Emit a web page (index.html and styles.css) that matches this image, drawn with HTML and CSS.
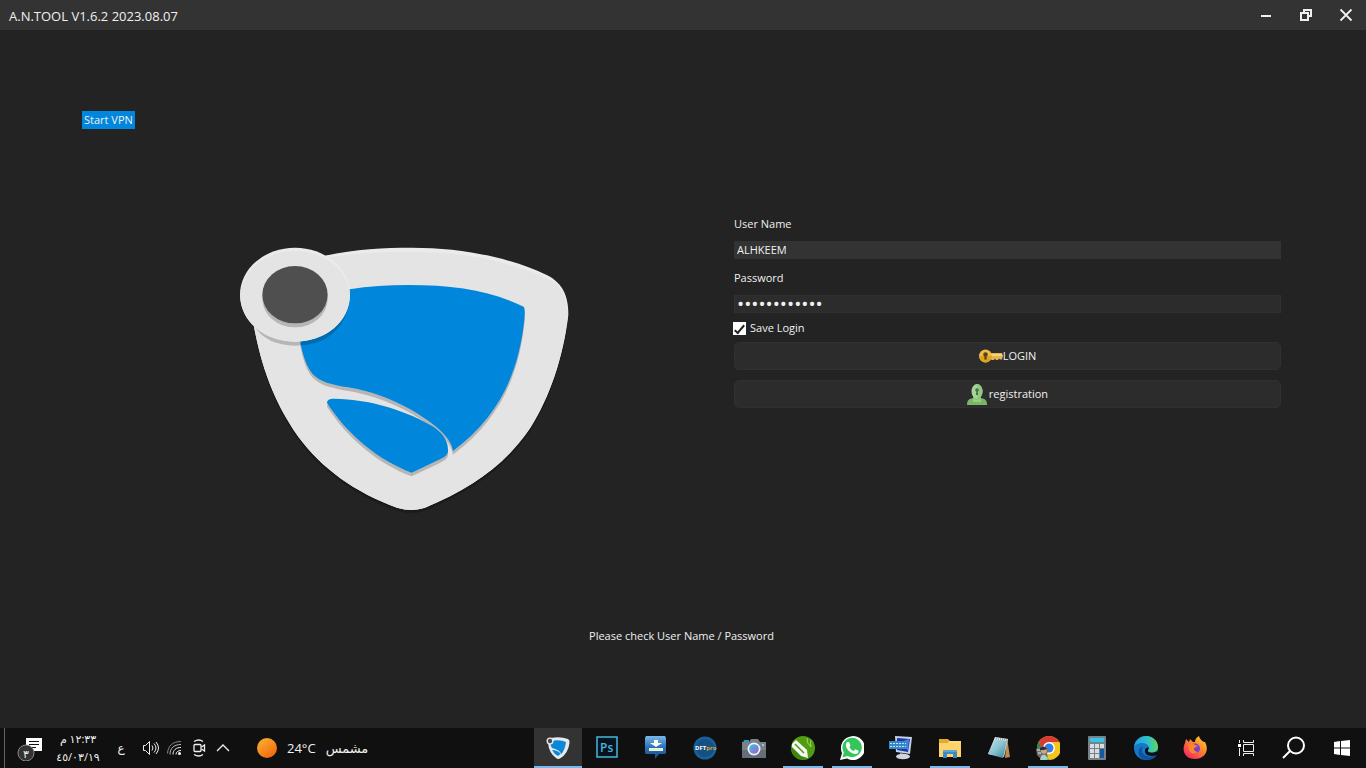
FILE: index.html
```html
<!DOCTYPE html>
<html lang="en">
<head>
    <meta charset="UTF-8">
    <meta name="viewport" content="width=device-width, initial-scale=1.0">
    <title>A.N.TOOL V1.6.2 2023.08.07</title>
    <link rel="stylesheet" href="styles.css">
</head>
<body>
    <header class="titlebar">
        <h1 class="titlebar-title">A.N.TOOL V1.6.2 2023.08.07</h1>
        <div class="window-controls">
            <button class="window-button" type="button" aria-label="Minimize">
                <svg viewBox="0 0 14 14"><path d="M2 8h10" stroke="#f0f0f0" stroke-width="2"/></svg>
            </button>
            <button class="window-button" type="button" aria-label="Restore">
                <svg viewBox="0 0 14 14" fill="none" stroke="#f0f0f0" stroke-width="2"><path d="M5 5V2h7v6H9"/><path d="M2 5h7v7H2z"/></svg>
            </button>
            <button class="window-button" type="button" aria-label="Close">
                <svg viewBox="0 0 14 14"><path d="M1.500 1.500l11 11M12.500 1.500l-11 11" stroke="#f0f0f0" stroke-width="1.800"/></svg>
            </button>
        </div>
    </header>

    <main class="main">
        <button class="vpn-button" type="button">Start VPN</button>

        <div class="login">
            <svg class="logo" viewBox="42 36 993 804" role="img" aria-label="A.N.TOOL">
                <defs>
                    <path id="shell" d="M300 62C390 42 480 38 560 38C710 38 850 66 965 120C1015 145 1030 185 1030 240C1015 365 975 485 915 580C840 690 740 760 600 818Q558 832 516 818C390 772 290 700 220 605C145 500 108 390 86 270Z"/>
                    <path id="blade" d="M374 163C430 153 490 150 550 150C690 150 800 168 896 215C901 222 899 240 898 255C880 420 820 545 684 648C679 600 610 555 560 525C500 492 435 467 370 457C320 449 285 441 262 416C236 385 226 330 220 280Z"/>
                    <path id="blade-small" d="M306 504C306 494 314 491 326 491C440 492 550 530 625 575C660 600 670 622 669 650C667 661 655 668 640 675L560 713C460 675 370 602 306 504Z"/>
                </defs>
                <use href="#shell" y="9" fill="#1b1b1b"/>
                <use href="#shell" fill="#ebebeb"/>
                <path d="M300 70C390 52 480 50 560 50C710 50 850 78 965 130C1010 150 1026 185 1029 240C1015 365 975 485 915 580C840 690 740 760 600 818Q558 832 516 818C390 772 290 700 220 605C145 500 108 390 86 270Z" fill="#e4e4e4"/>
                <use href="#blade" y="11" fill="#b6b6b6"/>
                <use href="#blade" fill="#0087dc"/>
                <use href="#blade-small" y="11" fill="#b6b6b6"/>
                <use href="#blade-small" fill="#0087dc"/>
                <path d="M86 270C110 312 155 332 210 332L228 331L225 300L100 250Z" fill="#b6b6b6"/>
                <path d="M225 310L227 331C310 328 372 270 374 180L340 170Z" fill="#006cb0"/>
                <ellipse cx="210" cy="179" rx="165" ry="141" fill="#ebebeb"/>
                <ellipse cx="210" cy="184" rx="164" ry="136" fill="#e4e4e4"/>
                <ellipse cx="210" cy="191" rx="98" ry="86" fill="#b6b6b6"/>
                <ellipse cx="210" cy="179" rx="98" ry="86" fill="#4f4f4f"/>
            </svg>

            <form class="login-form">
                <label class="field-label" for="username">User Name</label>
                <input class="field-input field-active" type="text" id="username" value="ALHKEEM">
                <label class="field-label" for="password">Password</label>
                <input class="field-input field-password" type="password" id="password" value="alhkeem12345">
                <div class="save-row">
                    <input class="save-check" type="checkbox" id="save" checked>
                    <label for="save">Save Login</label>
                </div>
                <button class="form-button" type="button">
                    <svg class="key-icon" viewBox="0 0 24 14">
                        <path d="M11 4h12l1 3-1 3.500h-2l-1-1-1 1.500h-2l-1-1.500-1 1.500h-2l-2-1z" fill="#e3b552"/>
                        <path d="M12 5h11v2H12z" fill="#f3d27c"/>
                        <circle cx="6.500" cy="7" r="6.500" fill="#edbd4b"/>
                        <path d="M0 7a6.500 6.500 0 0 0 13 0z" fill="#dfa31f"/>
                        <circle cx="6.500" cy="5.500" r="2.300" fill="#5a4315"/>
                        <path d="M5.800 6h1.400l.6 4.500H5.200z" fill="#5a4315"/>
                    </svg>
                    LOGIN
                </button>
                <button class="form-button" type="button">
                    <svg class="user-icon" viewBox="0 0 20 21">
                        <path d="M0 21c0-5 2-6 6-7l1-2h6l1 2c4 1 6 2 6 7z" fill="#79b765"/>
                        <path d="M6 14c2 2 6 2 8 0v4H6z" fill="#9bce85"/>
                        <ellipse cx="10" cy="7.500" rx="5.500" ry="7.500" fill="#a8d49b"/>
                        <path d="M10 0a5.500 7.500 0 0 1 0 15z" fill="#92c980"/>
                        <circle cx="10" cy="6" r="1.800" fill="#41704a"/>
                        <path d="M9.400 7h1.200l.5 4H8.900z" fill="#41704a"/>
                    </svg>
                    registration
                </button>
            </form>
        </div>

        <p class="message">Please check User Name / Password</p>
    </main>

    <footer class="taskbar">
        <div class="tray">
            <button class="tray-button tray-notes" type="button" aria-label="Notifications">
                <svg viewBox="0 0 26 26">
                    <path d="M9 3h16v13h-9v3l-3-3H9z" fill="#fff"/>
                    <path d="M12 6.500h10M12 9.500h10M12 12.500h7" stroke="#111"/>
                    <circle cx="9" cy="18" r="8" fill="#333" stroke="#888"/>
                </svg>
                <span class="badge">٣</span>
            </button>
            <div class="clock" dir="rtl">
                <span>١٢:٣٣ م</span>
                <span>٤٥/٠٣/١٩</span>
            </div>
            <button class="tray-button tray-lang" type="button">ع</button>
            <button class="tray-button" type="button" aria-label="Volume">
                <svg class="tray-icon" viewBox="0 0 18 18" fill="none" stroke="#eee"><path d="M1.500 6.500h2l4-4v13l-4-4h-2z"/><path d="M10 6.500q2 2.500 0 5M12 4.500q4 4.500 0 9M14 3q5 6 0 12"/></svg>
            </button>
            <button class="tray-button" type="button" aria-label="Network">
                <svg class="tray-icon" viewBox="0 0 18 18" fill="none" stroke="#eee"><path d="M4 15.500C4 9 8 5.500 15 5.500" stroke="#bbb"/><path d="M7 15.500C7 11 10 8.500 15 8.500M10 15.500C10 13 12 11.500 15 11.500"/><path d="M1.500 14.500C2 6.500 7 2.500 15 2.500" stroke="#888"/><circle cx="13.500" cy="14.500" r="1.500" fill="#fff" stroke="none"/></svg>
            </button>
            <button class="tray-button" type="button" aria-label="Meet now">
                <svg class="tray-icon" viewBox="0 0 18 18" fill="none" stroke="#eee" stroke-width="1.300"><rect x="4" y="5.500" width="7" height="7" rx="1"/><path d="M11.500 8l3-2v6l-3-2M4 2.500q5-3 9 0M4 15.500q5 3 9 0"/></svg>
            </button>
            <button class="tray-button" type="button" aria-label="Show hidden icons">
                <svg class="tray-icon" viewBox="0 0 18 18" fill="none" stroke="#eee" stroke-width="1.400"><path d="M3 12l6-6 6 6"/></svg>
            </button>
            <button class="weather" type="button">
                <svg class="sun" viewBox="0 0 20 20">
                    <defs><linearGradient id="sun" x2="0.700" y2="1"><stop stop-color="#fbb636"/><stop offset="1" stop-color="#f1690d"/></linearGradient></defs>
                    <circle cx="10" cy="10" r="10" fill="url(#sun)"/>
                </svg>
                <span>24°C</span>
                <span lang="ar">مشمس</span>
            </button>
        </div>

        <nav class="apps" aria-label="Taskbar">
            <button class="app app-current" type="button" aria-label="A.N.TOOL">
                <svg viewBox="0 0 24 24">
                    <path d="M5 2Q14 0 22 3Q24 4 23.500 7Q22 18 14 22.500Q12 23.500 10 22Q3 17 2 7z" fill="#e7eaed"/>
                    <path d="M8 4.500Q15 3.500 20 6Q19 14 15 18.500Q15 14 6 12Q4.500 10 4.500 8z" fill="#0b87d8"/>
                    <path d="M6 14Q12 14 14.500 18L12 20Q8 18 6 14z" fill="#0b87d8"/>
                    <circle cx="4" cy="5" r="3.500" fill="#e7eaed"/><circle cx="4" cy="5" r="2.200" fill="#4a4a4a"/>
                </svg>
            </button>
            <button class="app" type="button" aria-label="Photoshop">
                <svg viewBox="0 0 24 24">
                    <rect x="2" y="1" width="20" height="20" fill="#07121e" stroke="#43b9dd" stroke-width="1.500"/>
                    <text class="ps-text" x="5" y="16">Ps</text>
                </svg>
            </button>
            <button class="app" type="button" aria-label="Downloader">
                <svg viewBox="0 0 24 24">
                    <defs><linearGradient id="dl" x2="0" y2="1"><stop stop-color="#78b9e9"/><stop offset=".5" stop-color="#2b70b7"/><stop offset="1" stop-color="#174c91"/></linearGradient></defs>
                    <path d="M2 0h19l1 2v15l-1 1h-6l-4 5v-5H2l-1-1V2z" fill="url(#dl)"/>
                    <path d="M10 4h4v3h4l-6 4-6-4h4z" fill="#fff"/><path d="M5 12h14v3H5z" fill="#e7f3d7"/>
                </svg>
            </button>
            <button class="app" type="button" aria-label="DFT Pro">
                <svg viewBox="0 0 24 24">
                    <circle cx="12" cy="12" r="11.500" fill="#17609b"/><circle cx="12" cy="12" r="9" fill="#174f82"/>
                    <text class="dft-text" x="2" y="14">DFT<tspan fill="#d3a43d">pro</tspan></text>
                </svg>
            </button>
            <button class="app" type="button" aria-label="Camera">
                <svg viewBox="0 0 24 24">
                    <defs><linearGradient id="lens" x2="1" y2="1"><stop stop-color="#38c2e4"/><stop offset="1" stop-color="#a55bd0"/></linearGradient></defs>
                    <path d="M2 4h5v3H1z" fill="#249bc8"/>
                    <path d="M0 6h7l2-3h7l2 3h6v16H0z" fill="#77818a"/><path d="M0 14h24v8H0z" fill="#656f78"/>
                    <circle cx="12" cy="13" r="6.500" fill="#f1f3f5"/><circle cx="12" cy="13" r="4.800" fill="url(#lens)"/><circle cx="21" cy="9" r="1" fill="#ccd2d6"/>
                </svg>
            </button>
            <button class="app app-open" type="button" aria-label="CorelDRAW">
                <svg viewBox="0 0 24 24">
                    <circle cx="12" cy="12" r="12" fill="#519d12"/>
                    <path d="M0 11a12 12 0 0 0 15 12z" fill="#3b860e"/>
                    <path d="M1 8l4-4 11 10 1 8-7-2L1 11z" fill="#f7f8f4"/>
                    <path d="M4 8l9 9" stroke="#4c9719" stroke-width="1.500"/>
                    <path d="M16 2q-1 5 4 9M20 4q-1 3 0 7" stroke="#a3d85f" fill="none"/>
                </svg>
            </button>
            <button class="app app-open" type="button" aria-label="WhatsApp">
                <svg viewBox="0 0 24 24">
                    <path d="M0 24l2-7A12 12 0 1 1 7 22.500z" fill="#fff"/>
                    <path d="M2.500 21.500l1.300-5A9.700 9.700 0 1 1 7.500 20z" fill="#35c65b"/>
                    <path d="M7 6l2 0 1.500 3.500L9.300 11q1.500 3 4.500 4l1.500-1.700 3.200 1.500c.5 2-1.500 3.500-3.500 3.200C10 17 6 13 6 9q0-2 1-3z" fill="#fff"/>
                </svg>
            </button>
            <button class="app" type="button" aria-label="Remote display">
                <svg viewBox="0 0 24 24">
                    <path d="M6 0l17 1-2 17-14-2z" fill="#c7d0e4"/><path d="M8 2l13 1-2 13-11-2z" fill="#1739a7"/>
                    <path d="M14 5l6-2-1 12z" fill="#4c80dd"/>
                    <path d="M0 5h18v8H0z" fill="#3488ca"/><path d="M1 7.500h16M1 10.500h16" stroke="#c0e5f7" stroke-dasharray="2 1"/>
                    <path d="M11 17l4 1v3h-4z" fill="#a8abb6"/><ellipse cx="14" cy="20.500" rx="7" ry="2.800" fill="#d2d5dc"/>
                </svg>
            </button>
            <button class="app app-open" type="button" aria-label="File Explorer">
                <svg viewBox="0 0 24 24">
                    <path d="M1 3h9l2 2h11v15H1z" fill="#e5a827"/><path d="M11 5h12v4H9z" fill="#fbdc83"/><path d="M1 7h22v14H1z" fill="#ffd369"/>
                    <path d="M5 14h14v8h-4v-4H9v4H5z" fill="#388bc5"/><path d="M5 14h14v2H5z" fill="#5ba7d2"/>
                </svg>
            </button>
            <button class="app" type="button" aria-label="Notepad">
                <svg viewBox="0 0 24 24">
                    <defs><linearGradient id="note" x2="1" y2="1"><stop stop-color="#bce5e8"/><stop offset=".5" stop-color="#88c2cf"/><stop offset="1" stop-color="#357e94"/></linearGradient></defs>
                    <path d="M20 2l3 19-5 1z" fill="#bd8c52"/><path d="M8 1l13 2-4 18-16-3z" fill="#e4eef0"/>
                    <path d="M8 3l12 2-4 17-15-4z" fill="url(#note)"/><path d="M9 2l11 2" stroke="#9aa2a3" stroke-width="2" stroke-dasharray="1 1"/>
                </svg>
            </button>
            <button class="app app-open" type="button" aria-label="Chrome">
                <svg viewBox="0 0 24 24">
                    <circle cx="13" cy="12" r="12" fill="#f4c51f"/><path d="M2.600 6A12 12 0 0 1 23.400 6H13L8 15z" fill="#d83b30"/>
                    <path d="M2.600 6L9 16l4 8A12 12 0 0 1 2.600 6z" fill="#23894d"/>
                    <circle cx="13" cy="12" r="6" fill="#fff"/><circle cx="13" cy="12" r="4.500" fill="#327ee7"/>
                    <path d="M0 13l4-3 6 1 3 4-2 2 1 6-6 1-5-5z" fill="#6f716b"/><circle cx="8" cy="15" r="2.800" fill="#d2a588"/><path d="M4 12q4-3 7 1l-3 1H4z" fill="#29302f"/><path d="M4 24q1-6 5-5l4 4-3 1z" fill="#a8d2ca"/><path d="M1 14h3M2 17h3" stroke="#eee9df"/>
                </svg>
            </button>
            <button class="app" type="button" aria-label="Calculator">
                <svg viewBox="0 0 24 24">
                    <rect x="3" width="18" height="24" rx="1" fill="#77818b"/><path d="M5 2h14v4H5z" fill="#35c5e7"/>
                    <path d="M5 8h4v4H5zM10 8h4v4h-4zM15 8h4v4h-4zM5 13h4v4H5zM10 13h4v4h-4zM5 18h4v4H5zM10 18h4v4h-4z" fill="#d9dde0"/><path d="M15 13h4v9h-4z" fill="#135ba1"/>
                </svg>
            </button>
            <button class="app" type="button" aria-label="Edge">
                <svg viewBox="0 0 24 24">
                    <defs><linearGradient id="edge" x2="1"><stop stop-color="#219ee0"/><stop offset=".6" stop-color="#31c1ca"/><stop offset="1" stop-color="#65d64e"/></linearGradient></defs>
                    <circle cx="12" cy="12" r="12" fill="#1479c9"/>
                    <path d="M0 11C1 4 6 0 12 0c8 0 12 6 12 11 0 4-4 6-8 5-2 0-3-1-2-2 3-3-1-7-5-7-5 0-8 2-9 4z" fill="url(#edge)"/>
                    <path d="M9 10c-4 7 3 12 11 10 2-1 3-2 3-1-3 5-10 6-14 4-6-3-6-10 0-13z" fill="#1152a0"/>
                    <path d="M14 14c-1 3 4 4 10 1l-1 4c-5 2-13 1-12-5 0-2 3-3 4-2z" fill="#101010"/>
                </svg>
            </button>
            <button class="app" type="button" aria-label="Firefox">
                <svg viewBox="0 0 24 24">
                    <defs><linearGradient id="fox" x1="1" x2=".2" y2="1"><stop stop-color="#ffe03b"/><stop offset=".4" stop-color="#ff9228"/><stop offset="1" stop-color="#f72466"/></linearGradient></defs>
                    <path d="M2 7l1-4 3 3 1-3 3 3h2q0-4 4-6 1 4 5 6l1 0c5 9-1 17-10 17C3 23-2 16 2 7z" fill="url(#fox)"/>
                    <circle cx="12" cy="12.500" r="5" fill="#7942c8"/><path d="M5 9q4-3 7 0l3 1-4 2q-1 3 4 4-6 4-9-2z" fill="#ff842d"/>
                </svg>
            </button>
            <button class="app app-system app-first" type="button" aria-label="Task View">
                <svg viewBox="0 0 24 24" fill="none" stroke="#eee"><path d="M9.500 4v2.500h10V4M9.500 8.500h10v7h-10zM9.500 20v-2.500h10V20M5.500 4v3M5.500 12v8"/><path d="M4 8h3v3H4z" fill="#fff" stroke="none"/></svg>
            </button>
            <button class="app app-system" type="button" aria-label="Search">
                <svg viewBox="0 0 24 24" fill="none" stroke="#fff" stroke-width="2"><circle cx="14" cy="9.500" r="8"/><path d="M8 15l-7 7"/></svg>
            </button>
            <button class="app app-system" type="button" aria-label="Start">
                <svg viewBox="0 0 24 24" fill="#fff"><path d="M4 6l6-1v6.500H4zM11 5l9-1v7.500h-9zM4 12.500h6V19l-6-1zM11 12.500h9V20l-9-1z"/></svg>
            </button>
        </nav>
    </footer>
</body>
</html>
```
FILE: styles.css
```css
:root {
    --bg: #232323;
    --bar: #333333;
    --control: #2c2c2c;
    --text: #f0f0f0;
    --blue: #0086dc;
    --underline: #76b9ed;
}

* {
    box-sizing: border-box;
}

body {
    display: flex;
    flex-direction: column;
    min-height: 100vh;
    margin: 0;
    background: var(--bg);
    color: var(--text);
    font-family: "Open Sans", "DejaVu Sans", sans-serif;
    font-size: 11px;
    line-height: 18px;
}

button,
input {
    font: inherit;
    color: inherit;
}

button {
    padding: 0;
    border: 0;
    background: none;
}

svg {
    display: block;
    flex-shrink: 0;
}

/* title bar */
.titlebar {
    display: flex;
    align-items: center;
    justify-content: space-between;
    height: 30px;
    padding-left: 9px;
    background: var(--bar);
}

.titlebar-title {
    margin: 0;
    padding-top: 2px;
    font-size: 13px;
    font-weight: 400;
}

.window-controls {
    display: flex;
}

.window-button {
    display: grid;
    place-items: center;
    width: 40px;
    height: 30px;
}

.window-button svg {
    width: 14px;
    height: 14px;
}

/* login page */
.main {
    display: flex;
    flex: 1;
    flex-direction: column;
    padding: 81px 85px 83px 82px;
}

.vpn-button {
    align-self: flex-start;
    padding: 0 2px;
    background: var(--blue);
}

.login {
    display: grid;
    grid-template-columns: 644fr 547fr;
    gap: 8px;
    margin-top: 86px;
}

.logo {
    width: 331px;
    max-width: 100%;
    margin: 32px auto 0;
}

.login-form {
    display: flex;
    flex-direction: column;
}

.field-label {
    margin-bottom: 8px;
}

.field-input {
    height: 18px;
    margin-bottom: 10px;
    padding: 0 2px;
    border: 1px solid #303030;
    background: var(--control);
    outline: 0;
}

.field-active {
    background: var(--bar);
    border-color: var(--bar);
}

.field-password {
    font-size: 19px;
}

.save-row {
    display: flex;
    align-items: center;
    gap: 4px;
    margin: -4px 0 5px -1px;
}

.save-check {
    appearance: none;
    width: 13px;
    height: 13px;
    margin: 0;
    background: #fff;
}

.save-check:checked::before {
    content: "";
    display: block;
    width: 5px;
    height: 9px;
    margin: 1px 4px;
    border: solid #222;
    border-width: 0 2px 2px 0;
    transform: rotate(40deg);
}

.save-check:checked {
    display: flex;
    align-items: flex-start;
}

.form-button {
    display: flex;
    align-items: center;
    justify-content: center;
    height: 28px;
    margin-bottom: 10px;
    border: 1px solid #303030;
    border-radius: 5px;
    background: var(--control);
}

.key-icon {
    width: 24px;
    height: 14px;
}

.user-icon {
    width: 20px;
    height: 21px;
    margin-right: 2px;
}

.message {
    margin: auto 0 0;
    text-align: center;
}

/* taskbar */
.taskbar {
    display: flex;
    justify-content: space-between;
    height: 40px;
    background: #101010;
}

.tray {
    display: flex;
    align-items: center;
    margin-left: 4px;
    padding-left: 12px;
    border-left: 1px solid #666;
}

.tray-button {
    display: grid;
    place-items: center;
    width: 24px;
    height: 40px;
}

.tray-notes {
    position: relative;
    width: 26px;
}

.tray-notes svg {
    width: 26px;
    height: 26px;
}

.badge {
    position: absolute;
    left: 6px;
    bottom: 5px;
    font-size: 11px;
}

.clock {
    display: flex;
    flex-direction: column;
    align-items: center;
    width: 70px;
    font-size: 11px;
}

.tray-lang {
    width: 16px;
    margin-right: 10px;
    font-size: 12px;
}

.tray-icon {
    width: 18px;
    height: 18px;
}

.weather {
    display: flex;
    align-items: center;
    gap: 10px;
    margin-left: 22px;
    font-size: 13px;
}

.sun {
    width: 20px;
    height: 20px;
}

.apps {
    display: flex;
    gap: 1px;
}

.app {
    display: grid;
    place-items: center;
    width: 48px;
    height: 40px;
}

.app svg {
    width: 24px;
    height: 24px;
}

.app-current {
    background: var(--bar);
    box-shadow: inset 0 -2px var(--underline);
}

.app-open {
    background: linear-gradient(var(--underline), var(--underline)) bottom / 40px 2px no-repeat;
}

.app-system + .app-system {
    margin-left: -1px;
}

.app-first {
    margin-left: 2px;
}

.ps-text {
    fill: #43b9dd;
    font-size: 12px;
    font-weight: 600;
}

.dft-text {
    fill: #fff;
    font-size: 6px;
    font-weight: 700;
}
```
